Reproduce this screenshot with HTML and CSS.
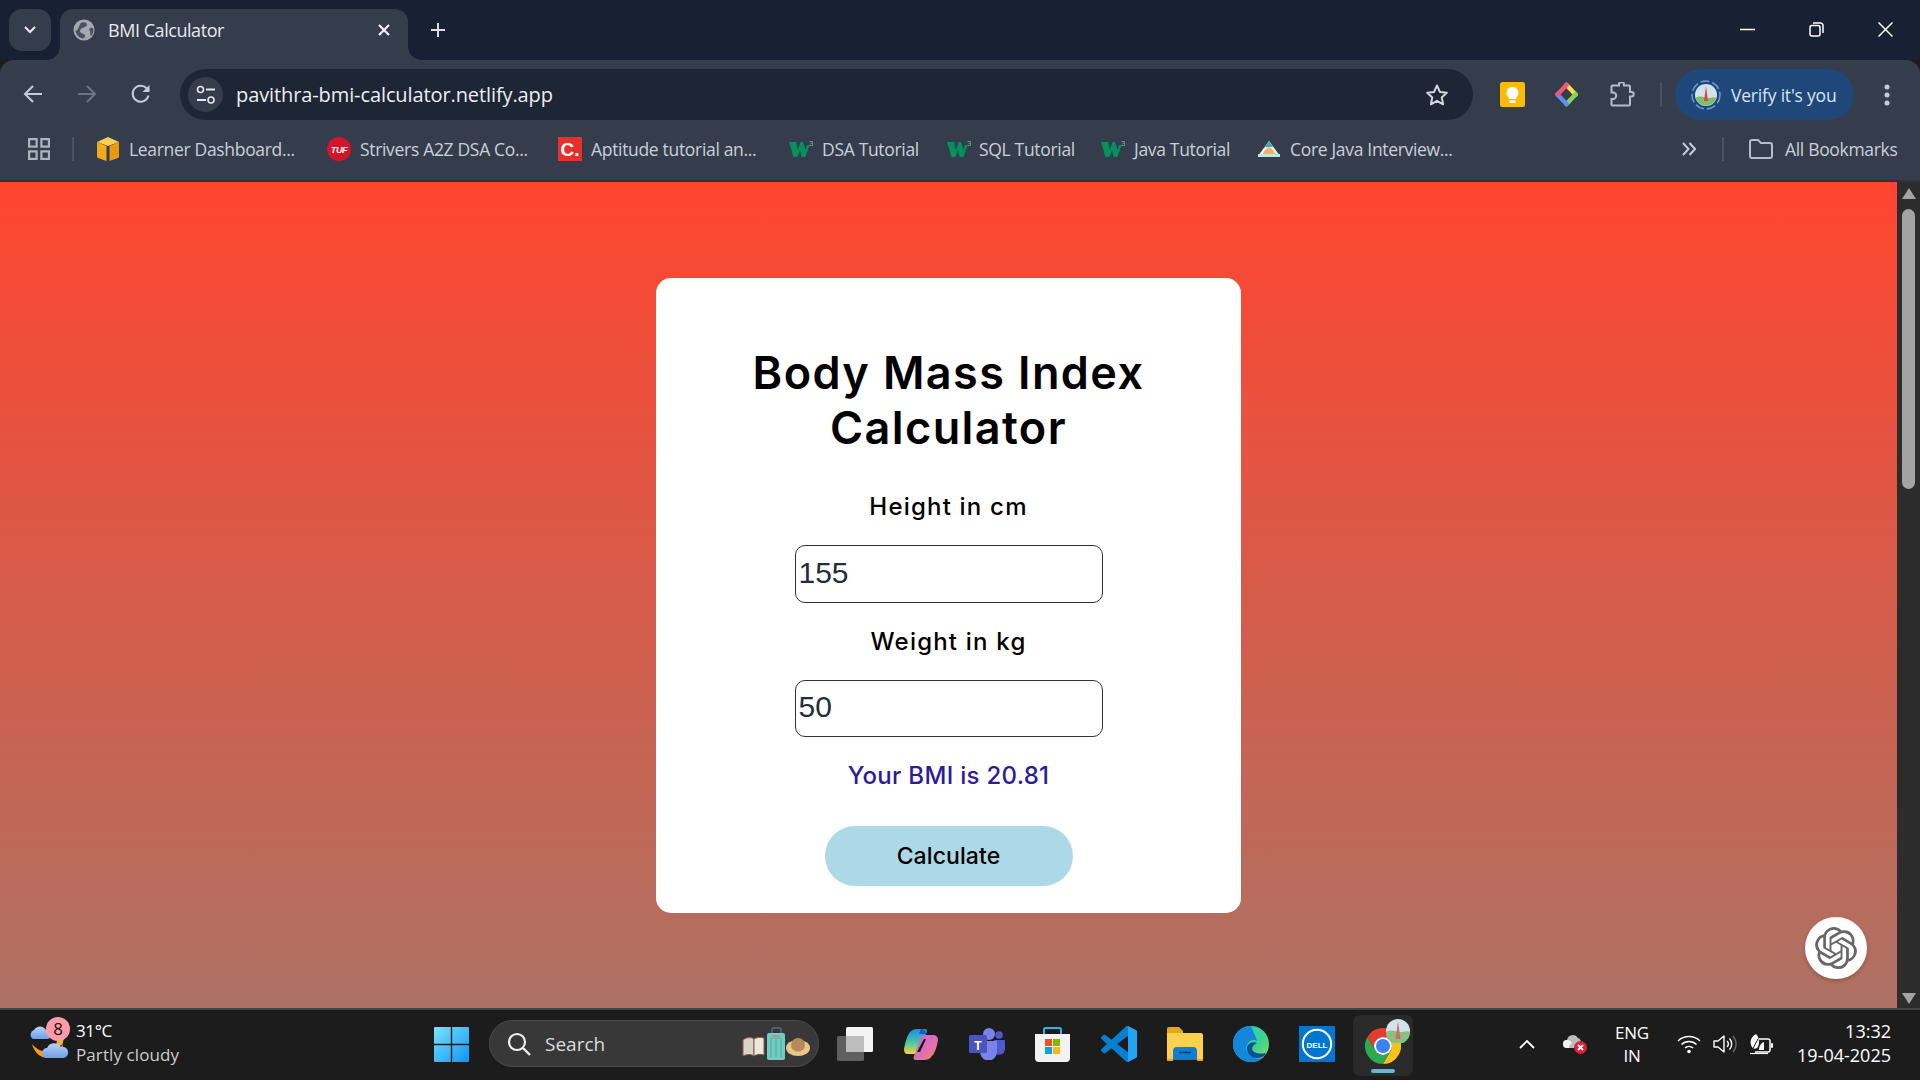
FILE: index.html
```html
<!DOCTYPE html>
<html lang="en">
<head>
<meta charset="utf-8">
<title>BMI Calculator</title>
<link rel="stylesheet" href="styles.css">
</head>
<body>
<header class="tabstrip">
  <button class="tab-menu"><svg width="14" height="8" viewBox="0 0 14 8"><path d="M2 1l5 5 5-5" fill="none" stroke="#e8eaed" stroke-width="2"/></svg></button>
  <div class="tab">
    <svg class="tab-globe" width="22" height="22" viewBox="0 0 22 22"><circle cx="11" cy="11" r="10.500" fill="#a3a9b3"/><path d="M9 3.500c3-.5 5 .5 5 2s-2 2.500-3.500 3S7 10 7 12s3 2.500 4.500 3.500.5 3-1 4C6.500 19 3 16 2.500 11.500 4.500 12 5 9.500 6 7.500S7 4 9 3.500zM17 9c1.500-.5 3 0 3.500 1.500 0 2.500-1 5-2.500 6.500-1-1.500-.5-3-1-4.500S16 9.500 17 9z" fill="#4a5160"/></svg>
    <span class="tab-title">BMI Calculator</span>
    <svg class="tab-close" width="14" height="14" viewBox="0 0 14 14"><path d="M2 2l10 10M12 2L2 12" stroke="#eef0f3" stroke-width="2.200"/></svg>
  </div>
  <svg class="new-tab" width="16" height="16" viewBox="0 0 16 16"><path d="M8 1v14M1 8h14" stroke="#d9dde3" stroke-width="2"/></svg>
  <div class="win-controls">
    <svg width="15" height="15" viewBox="0 0 15 15"><path d="M0 7.500h15" stroke="#fff" stroke-width="1.500"/></svg>
    <svg width="15" height="15" viewBox="0 0 15 15"><rect x="1" y="3.500" width="10" height="10.500" rx="2" fill="none" stroke="#fff" stroke-width="1.500"/><path d="M4 1h7.500A2.500 2.500 0 0 1 14 3.500V11" fill="none" stroke="#fff" stroke-width="1.500"/></svg>
    <svg width="15" height="15" viewBox="0 0 15 15"><path d="M.5.500l14 14M14.500.500l-14 14" stroke="#fff" stroke-width="1.500"/></svg>
  </div>
</header>

<nav class="toolbar">
  <svg class="nav-btn" width="24" height="24" viewBox="0 0 24 24"><path d="M21 12H5M12 4l-8 8 8 8" fill="none" stroke="#c5ccd6" stroke-width="2"/></svg>
  <svg class="nav-btn" width="24" height="24" viewBox="0 0 24 24"><path d="M3 12h16M12 4l8 8-8 8" fill="none" stroke="#6e7582" stroke-width="2"/></svg>
  <svg class="nav-btn" width="24" height="24" viewBox="0 0 24 24"><path d="M19.500 13.500A8 8 0 1 1 17.600 6.300L20 8.600" fill="none" stroke="#c5ccd6" stroke-width="2"/><path d="M20.500 3v7h-7z" fill="#c5ccd6"/></svg>
  <div class="omnibox">
    <span class="site-chip"><svg width="20" height="20" viewBox="0 0 20 20"><circle cx="4.500" cy="4.500" r="3" fill="none" stroke="#e4e7ec" stroke-width="1.600"/><path d="M10 4.500h9M1 15h9" stroke="#e4e7ec" stroke-width="1.800"/><circle cx="15" cy="15" r="3" fill="none" stroke="#e4e7ec" stroke-width="1.600"/></svg></span>
    <span class="url">pavithra-bmi-calculator.netlify.app</span>
    <svg class="star" width="24" height="24" viewBox="0 0 24 24"><path d="M12 2.500l2.900 6.400 6.900.8-5.100 4.700 1.400 6.900-6.100-3.500-6.100 3.500 1.400-6.900-5.100-4.700 6.900-.8z" fill="none" stroke="#d2d6dc" stroke-width="2" stroke-linejoin="round"/></svg>
  </div>
  <svg class="ext ext-keep" width="25" height="25" viewBox="0 0 25 25"><rect width="25" height="25" rx="2.500" fill="#fbbc04"/><path d="M12.500 5a6 6 0 0 0-3.500 10.800V17h7v-1.200A6 6 0 0 0 12.500 5z" fill="#fff"/><rect x="9.500" y="18.500" width="6" height="2.500" fill="#fff"/></svg>
  <svg class="ext ext-diamond" width="25" height="25" viewBox="0 0 25 25"><path d="M12.500 3l9 9.500" stroke="#f4e04d" stroke-width="4.500" stroke-linecap="round"/><path d="M21.500 12.500l-9 9.500" stroke="#7ed957" stroke-width="4.500" stroke-linecap="round"/><path d="M12.500 22l-9-9.500" stroke="#5b8df6" stroke-width="4.500" stroke-linecap="round"/><path d="M3.500 12.500l9-9.500" stroke="#f0567a" stroke-width="4.500" stroke-linecap="round"/></svg>
  <svg class="ext ext-puzzle" width="25" height="25" viewBox="0 0 25 25"><path d="M2.500 4h6.500V3a2.500 2.500 0 0 1 5 0v1h5a1 1 0 0 1 1 1v5.500h1.500a2.200 2.200 0 0 1 0 4.400H20V23a1 1 0 0 1-1 1H2.500a1 1 0 0 1-1-1v-5.500H3a3.200 3.200 0 0 0 0-6.400H1.500V5a1 1 0 0 1 1-1z" fill="none" stroke="#b5bcc8" stroke-width="2" transform="translate(0 -.5)"/></svg>
  <span class="tool-sep"></span>
  <div class="profile">
    <svg width="30" height="30" viewBox="0 0 30 30"><circle cx="15" cy="15" r="14" fill="none" stroke="#6f9bd6" stroke-width="1.500" stroke-dasharray="9 3"/><circle cx="15" cy="15" r="11" fill="#cfe4ea"/><path d="M4.500 18c4-3 8-1 10.500 0s7-2 10.500 0A11 11 0 0 1 4.500 18z" fill="#7fbf6a"/><path d="M15 6l2 15h-4z" fill="#e0453c"/></svg>
    <span class="verify">Verify it's you</span>
  </div>
  <svg class="kebab" width="6" height="22" viewBox="0 0 6 22"><circle cx="3" cy="3" r="2.500" fill="#c5ccd6"/><circle cx="3" cy="11" r="2.500" fill="#c5ccd6"/><circle cx="3" cy="19" r="2.500" fill="#c5ccd6"/></svg>
</nav>

<nav class="bookmarks">
  <svg class="apps" width="22" height="22" viewBox="0 0 22 22"><g fill="none" stroke="#aeb4be" stroke-width="2.200"><rect x="1.100" y="1.100" width="7.500" height="7.500"/><rect x="13.400" y="1.100" width="7.500" height="7.500"/><rect x="1.100" y="13.400" width="7.500" height="7.500"/><rect x="13.400" y="13.400" width="7.500" height="7.500"/></g></svg>
  <span class="bm-sep"></span>
  <a class="bm bm-1"><svg width="22" height="24" viewBox="0 0 22 24"><path d="M0 5l11-5 11 5-11 4z" fill="#f6cf57"/><path d="M0 5l9.500 4v15L1 21a1.500 1.500 0 0 1-1-1.500z" fill="#f0ac1c"/><path d="M22 5l-9.500 4v15l8.500-3a1.500 1.500 0 0 0 1-1.500z" fill="#e89a10"/></svg><span>Learner Dashboard...</span></a>
  <a class="bm bm-2"><svg width="24" height="24" viewBox="0 0 24 24"><circle cx="12" cy="12" r="12" fill="#d3142a"/><text x="12" y="15.500" class="logo-tuf">TUF</text></svg><span>Strivers A2Z DSA Co...</span></a>
  <a class="bm bm-3"><svg width="24" height="24" viewBox="0 0 24 24"><rect width="24" height="24" fill="#e8302a"/><text x="12" y="19" class="logo-c">C.</text></svg><span>Aptitude tutorial an...</span></a>
  <a class="bm bm-4"><svg width="24" height="18" viewBox="0 0 24 18"><path d="M0 2h7l2 8 2.500-8H14l2.500 8 1.500-5h2.500l-4 12h-4L11 10l-2.500 7h-4z" fill="#04915f"/><text x="20" y="6" class="logo-3">3</text></svg><span>DSA Tutorial</span></a>
  <a class="bm bm-5"><svg width="24" height="18" viewBox="0 0 24 18"><path d="M0 2h7l2 8 2.500-8H14l2.500 8 1.500-5h2.500l-4 12h-4L11 10l-2.500 7h-4z" fill="#04915f"/><text x="20" y="6" class="logo-3">3</text></svg><span>SQL Tutorial</span></a>
  <a class="bm bm-6"><svg width="24" height="18" viewBox="0 0 24 18"><path d="M0 2h7l2 8 2.500-8H14l2.500 8 1.500-5h2.500l-4 12h-4L11 10l-2.500 7h-4z" fill="#04915f"/><text x="20" y="6" class="logo-3">3</text></svg><span>Java Tutorial</span></a>
  <a class="bm bm-7"><svg width="24" height="18" viewBox="0 0 24 18"><path d="M12 1L1 16h22z" fill="#eef3f5"/><path d="M12 1L8 7h8z" fill="#3fa7b5"/><path d="M8 10l4-3 4 3 3 5H5z" fill="#f4b063"/><path d="M1 14h22v3H1z" fill="#bfe5ea"/></svg><span>Core Java Interview...</span></a>
  <svg class="more" width="14" height="14" viewBox="0 0 14 14"><path d="M1 1l5.500 6L1 13M7.500 1L13 7l-5.500 6" fill="none" stroke="#c5ccd6" stroke-width="2"/></svg>
  <span class="bm-sep bm-sep-right"></span>
  <a class="bm bm-all"><svg width="24" height="20" viewBox="0 0 24 20"><path d="M1 3a2 2 0 0 1 2-2h6l3 3h9a2 2 0 0 1 2 2v11a2 2 0 0 1-2 2H3a2 2 0 0 1-2-2z" fill="none" stroke="#b5bcc8" stroke-width="2"/></svg><span>All Bookmarks</span></a>
</nav>

<div class="viewport">
  <main class="page">
    <section class="card">
      <h1>Body Mass Index Calculator</h1>
      <label class="field-label" for="h">Height in cm</label>
      <input class="field" id="h" type="text" value="155">
      <label class="field-label field-next" for="w">Weight in kg</label>
      <input class="field" id="w" type="text" value="50">
      <p class="result">Your BMI is 20.81</p>
      <button class="calc">Calculate</button>
    </section>
    <button class="gpt"><svg width="42" height="42" viewBox="0 0 24 24"><path fill="#676767" d="M22.2819 9.8211a5.9847 5.9847 0 0 0-.5157-4.9108 6.0462 6.0462 0 0 0-6.5098-2.9A6.0651 6.0651 0 0 0 4.9807 4.1818a5.9847 5.9847 0 0 0-3.9977 2.9 6.0462 6.0462 0 0 0 .7427 7.0966 5.98 5.98 0 0 0 .511 4.9107 6.051 6.051 0 0 0 6.5146 2.9001A5.9847 5.9847 0 0 0 13.2599 24a6.0557 6.0557 0 0 0 5.7718-4.2058 5.9894 5.9894 0 0 0 3.9977-2.9001 6.0557 6.0557 0 0 0-.7475-7.0729zm-9.022 12.6081a4.4755 4.4755 0 0 1-2.8764-1.0408l.1419-.0804 4.7783-2.7582a.7948.7948 0 0 0 .3927-.6813v-6.7369l2.02 1.1686a.071.071 0 0 1 .038.052v5.5826a4.504 4.504 0 0 1-4.4945 4.4944zm-9.6607-4.1254a4.4708 4.4708 0 0 1-.5346-3.0137l.142.0852 4.783 2.7582a.7712.7712 0 0 0 .7806 0l5.8428-3.3685v2.3324a.0804.0804 0 0 1-.0332.0615L9.74 19.9502a4.4992 4.4992 0 0 1-6.1408-1.6464zM2.3408 7.8956a4.485 4.485 0 0 1 2.3655-1.9728V11.6a.7664.7664 0 0 0 .3879.6765l5.8144 3.3543-2.0201 1.1685a.0757.0757 0 0 1-.071 0l-4.8303-2.7865A4.504 4.504 0 0 1 2.3408 7.872zm16.5963 3.8558L13.1038 8.364 15.1192 7.2a.0757.0757 0 0 1 .071 0l4.8303 2.7913a4.4944 4.4944 0 0 1-.6765 8.1042v-5.6772a.79.79 0 0 0-.407-.667zm2.0107-3.0231l-.142-.0852-4.7735-2.7818a.7759.7759 0 0 0-.7854 0L9.409 9.2297V6.8974a.0662.0662 0 0 1 .0284-.0615l4.8303-2.7866a4.4992 4.4992 0 0 1 6.6802 4.66zM8.3065 12.863l-2.02-1.1638a.0804.0804 0 0 1-.038-.0567V6.0742a4.4992 4.4992 0 0 1 7.3757-3.4537l-.142.0805L8.704 5.459a.7948.7948 0 0 0-.3927.6813zm1.0976-2.3654l2.602-1.4998 2.6069 1.4998v2.9994l-2.5974 1.4997-2.6067-1.4997Z"/></svg></button>
  </main>
  <aside class="scrollbar">
    <span class="arrow-up"></span>
    <span class="thumb"></span>
    <span class="arrow-down"></span>
  </aside>
</div>

<footer class="taskbar">
  <div class="weather">
    <svg class="weather-icon" width="42" height="42" viewBox="0 0 42 42"><defs><linearGradient id="cl" x1="0" y1="0" x2="0" y2="1"><stop offset="0" stop-color="#b6d3f7"/><stop offset="1" stop-color="#6f9de6"/></linearGradient></defs><path d="M3 27c2 8 8 14 16 14 9 0 15-6 15-14-3 6-8 8-14 8-7 0-13-3-17-8z" fill="#f59b1c"/><path d="M34 16c1 4 1 8-1 12l-6 2 2-14z" fill="#f2b330"/><path d="M4 22a5 5 0 0 1 1-9 7 7 0 0 1 12 0 4.500 4.500 0 0 1 2 9z" fill="url(#cl)"/><path d="M18 41a5 5 0 0 1 0-10 8 8 0 0 1 14-1 5.500 5.500 0 0 1 3 11z" fill="url(#cl)"/><circle cx="29" cy="12" r="12" fill="#ff9ba8"/><text x="29" y="18" class="badge-num">8</text></svg>
    <div class="weather-text"><span class="temp">31°C</span><span class="cond">Partly cloudy</span></div>
  </div>
  <svg class="win-logo" width="35" height="35" viewBox="0 0 35 35"><defs><linearGradient id="wl" x1="0" y1="0" x2="1" y2="1"><stop offset="0" stop-color="#79e4ff"/><stop offset="1" stop-color="#0d94f5"/></linearGradient></defs><path d="M1 0h15.800v16.800H0V1a1 1 0 0 1 1-1zM18.200 0H34a1 1 0 0 1 1 1v15.800H18.200zM0 18.200h16.800V35H1a1 1 0 0 1-1-1zM18.200 18.200H35V34a1 1 0 0 1-1 1H18.200z" fill="url(#wl)"/></svg>
  <div class="search">
    <svg width="24" height="24" viewBox="0 0 24 24"><circle cx="10" cy="10" r="8" fill="none" stroke="#f0f0f0" stroke-width="2.200"/><path d="M16 16l7 7" stroke="#f0f0f0" stroke-width="2.400"/></svg>
    <span class="search-text">Search</span>
    <svg class="search-art" width="68" height="34" viewBox="0 0 68 34"><path d="M1 13c4-3 8-3 11-1v17c-3-2-7-2-11 0z" fill="#d9d3c8" stroke="#8a5a44"/><path d="M12 12c3-2 7-2 10-1v17c-3-1-7-1-10 1z" fill="#ece7dc" stroke="#8a5a44"/><path d="M30 6V2a1.500 1.500 0 0 1 1.500-1h6A1.500 1.500 0 0 1 39 2v4" fill="none" stroke="#4d6b8f" stroke-width="1.500"/><rect x="25" y="6" width="18" height="27" rx="2" fill="#6ecdc0"/><path d="M29 10v20M34 10v20M39 10v20" stroke="#4eaaa0"/><rect x="30" y="8" width="8" height="4" fill="#8fa8a8"/><ellipse cx="56" cy="21" rx="12" ry="8" fill="#e7c687"/><ellipse cx="56" cy="18" rx="7" ry="7" fill="#b9895a"/><path d="M46 21c5 4 15 4 21 0-2 4-18 5-21 0z" fill="#f0d48c"/></svg>
  </div>
  <svg class="app app-tv" width="36" height="34" viewBox="0 0 36 34"><rect x="0" y="9" width="27" height="25" rx="1.500" fill="#5f5f5f"/><rect x="9" y="0" width="27" height="25" rx="1.500" fill="#f3f3f3"/><rect x="9" y="9" width="18" height="16" fill="#bdbdbd"/></svg>
  <svg class="app app-cp" width="34" height="32" viewBox="0 0 34 32"><defs><linearGradient id="cpa" x1="0" y1="0" x2="0" y2="1"><stop offset="0" stop-color="#1b8ce8"/><stop offset=".55" stop-color="#4bc8a0"/><stop offset="1" stop-color="#f5d33c"/></linearGradient><linearGradient id="cpb" x1="0" y1="0" x2="1" y2="1"><stop offset="0" stop-color="#b06be0"/><stop offset=".6" stop-color="#e86eb0"/><stop offset="1" stop-color="#f5913e"/></linearGradient></defs><path d="M13 1h8c3 0 2 3 1 5l-7 18c-1 2-2 2-5 2H4c-3 0-4-2-4-5 1-6 3-13 6-17 2-2 4-3 7-3z" fill="url(#cpa)"/><path d="M23 7h6c3 0 5 2 5 5-1 6-3 13-6 16-2 3-5 4-8 4h-8c-2 0-3-1-2-4l6-17c1-3 3-4 7-4z" fill="url(#cpb)"/><path d="M20 11l-7 13h3l6-13z" fill="#111"/><path d="M17 1c3 0 5 2 5 5h-7z" fill="#1559c8"/></svg>
  <svg class="app app-teams" width="36" height="32" viewBox="0 0 36 32"><circle cx="20" cy="6" r="6" fill="#7b83eb"/><circle cx="30" cy="7" r="3.800" fill="#5059c9"/><path d="M25 12h10a1 1 0 0 1 1 1v8a6 6 0 0 1-9 5z" fill="#5059c9"/><path d="M11 13h17v11a8.500 8.500 0 0 1-17 0z" fill="#7b83eb"/><rect x="0" y="7" width="18" height="18" rx="1.500" fill="#4b53bc"/><text x="9" y="21.500" class="logo-t">T</text></svg>
  <svg class="app app-store" width="35" height="35" viewBox="0 0 35 35"><path d="M9 7V2.500A1.500 1.500 0 0 1 10.500 1h14A1.500 1.500 0 0 1 26 2.500V7" fill="none" stroke="#29b6e8" stroke-width="2"/><path d="M0 7h35v24a4 4 0 0 1-4 4H4a4 4 0 0 1-4-4z" fill="#f3f3f3"/><rect x="10" y="12" width="7" height="7" fill="#f25022"/><rect x="18" y="12" width="7" height="7" fill="#7fba00"/><rect x="10" y="20" width="7" height="7" fill="#00a4ef"/><rect x="18" y="20" width="7" height="7" fill="#ffb900"/></svg>
  <svg class="app app-vs" width="36" height="36" viewBox="0 0 24 24"><path fill="#0b7fcf" d="M23.15 2.587L18.21.21a1.494 1.494 0 0 0-1.705.29l-9.46 8.63-4.12-3.128a.999.999 0 0 0-1.276.057L.327 7.261A1 1 0 0 0 .326 8.74L3.899 12 .326 15.26a1 1 0 0 0 .001 1.479L1.65 17.94a.999.999 0 0 0 1.276.057l4.12-3.128 9.46 8.63a1.492 1.492 0 0 0 1.704.29l4.942-2.377A1.5 1.5 0 0 0 24 20.06V3.939a1.5 1.5 0 0 0-.85-1.352zm-5.146 14.861L10.826 12l7.178-5.448v10.896z"/><path fill="#24a3f0" d="M18 .1c.1 0 .2.1.3.1l4.850 2.387A1.500 1.500 0 0 1 24 3.939v16.122a1.500 1.500 0 0 1-.85 1.352l-4.940 2.377c-.1.050-.1.050-.210.100z"/></svg>
  <svg class="app app-folder" width="36" height="34" viewBox="0 0 36 34"><path d="M0 2a2 2 0 0 1 2-2h10l4 4v6H0z" fill="#e3a71a"/><path d="M0 6h34a2 2 0 0 1 2 2v24H0z" fill="#fdd04f"/><path d="M6 33V24a4 4 0 0 1 4-4h16a4 4 0 0 1 4 4v9z" fill="#0f7ed4"/><path d="M12 25.500h12" stroke="#083f78" stroke-width="1.600"/><rect y="32" width="6" height="2" fill="#e7a816"/><rect x="30" y="32" width="6" height="2" fill="#e7a816"/></svg>
  <svg class="app app-edge" width="36" height="36" viewBox="0 0 36 36"><defs><linearGradient id="eg" x1="0" y1="0" x2="1" y2="1"><stop offset="0" stop-color="#30c6d6"/><stop offset=".6" stop-color="#3ed18f"/><stop offset="1" stop-color="#88e05a"/></linearGradient></defs><circle cx="18" cy="18" r="18" fill="url(#eg)"/><path d="M18 0C7 0 0 8 0 18c0 10 8 18 18 18 6 0 10-2 13-5-4 2-9 2-13-1-5-3-6-9-3-13 2-3 6-4 9-2-1-5-4-9-6-15z" fill="#1587d8"/><path d="M24 17c-4-2-9 0-10 4-1 6 4 11 10 11 3 0 5-1 7-2 2-2 2-3 1-3-3 1-9 1-12-2-2-3 0-6 4-8z" fill="#0b4f9c"/></svg>
  <svg class="app app-dell" width="36" height="36" viewBox="0 0 36 36"><rect width="36" height="36" fill="#0076ce"/><circle cx="18" cy="18" r="14.200" fill="none" stroke="#fff" stroke-width="2"/><text x="18" y="21.500" class="logo-dell">DELL</text></svg>
  <div class="app-chrome">
    <svg class="chrome-icon" width="36" height="36" viewBox="0 0 36 36"><path d="M2.400 9A18 18 0 0 1 33.600 9H18A9 9 0 0 0 10.200 22.500z" fill="#e33b2e"/><path d="M33.600 9A18 18 0 0 1 18 36L25.800 22.500A9 9 0 0 0 18 9z" fill="#fbc116"/><path d="M18 36A18 18 0 0 1 2.400 9L10.200 22.500A9 9 0 0 0 25.800 22.500z" fill="#2da94f"/><circle cx="18" cy="18" r="9" fill="#fff"/><circle cx="18" cy="18" r="7" fill="#3b82ee"/></svg>
    <svg class="chrome-avatar" width="24" height="24" viewBox="0 0 24 24"><circle cx="12" cy="12" r="12" fill="#cfe4ea"/><path d="M0 13c5-3 8-1 12 0s8-2 12 0a12 12 0 0 1-24 0z" fill="#8cbf82"/><path d="M12 2l2.500 18h-5z" fill="#d9666a"/></svg>
    <span class="chrome-active"></span>
  </div>
  <svg class="tray-chev" width="16" height="9" viewBox="0 0 16 9"><path d="M1 8l7-7 7 7" fill="none" stroke="#fff" stroke-width="1.800"/></svg>
  <svg class="tray-cloud" width="24" height="20" viewBox="0 0 24 20"><path d="M4 14a4 4 0 0 1 0-8 6 6 0 0 1 11-2 5 5 0 0 1 3 5v5z" fill="#bdbdbd"/><path d="M4 14a4 4 0 0 1 0-8c2-.5 4 1 5 3-2 1-3 3-3 5z" fill="#f2f2f2"/><circle cx="17.500" cy="13.500" r="6.500" fill="#e01e36"/><path d="M15 11l5 5M20 11l-5 5" stroke="#fff" stroke-width="1.800"/></svg>
  <div class="lang"><span>ENG</span><span>IN</span></div>
  <svg class="tray-wifi" width="24" height="20" viewBox="0 0 24 20"><g fill="none" stroke="#fff" stroke-width="1.500"><path d="M1 7a16 16 0 0 1 22 0"/><path d="M4.500 10.500a11 11 0 0 1 15 0"/><path d="M8 14a6 6 0 0 1 8 0"/></g><circle cx="12" cy="17.500" r="1.800" fill="#fff"/></svg>
  <svg class="tray-vol" width="24" height="20" viewBox="0 0 24 20"><path d="M1 7h4l6-5v16l-6-5H1z" fill="none" stroke="#fff" stroke-width="1.400" stroke-linejoin="round"/><path d="M14 7a4 4 0 0 1 0 6M16.500 4.500a8 8 0 0 1 0 11" fill="none" stroke="#fff" stroke-width="1.400"/><path d="M20 2a12 12 0 0 1 0 16" fill="none" stroke="#666" stroke-width="1.400"/></svg>
  <svg class="tray-bat" width="24" height="22" viewBox="0 0 24 22"><path d="M10 6h9a2 2 0 0 1 2 2v9a2 2 0 0 1-2 2H6" fill="none" stroke="#fff" stroke-width="1.500"/><path d="M1 20.500h18" stroke="#fff" stroke-width="1.200"/><rect x="22" y="10" width="2" height="5" rx="1" fill="#fff"/><path d="M7 1C2 4 0 9 3 14c1 2 3 2 5 1 3-3 3-10-1-14z" fill="#fff"/><path d="M15 9c-3 1-5 4-5 8h5z" fill="#fff"/><path d="M2 19L9 6" stroke="#1c1c1c" stroke-width="1"/></svg>
  <div class="clock"><span>13:32</span><span>19-04-2025</span></div>
</footer>
</body>
</html>
```

FILE: styles.css
```css
* { box-sizing: border-box; }
html, body { margin: 0; height: 100%; overflow: hidden; }
body { display: flex; flex-direction: column; height: 1080px; font-family: "Open Sans", "Noto Sans", sans-serif; background: #1c1c1c; }
svg { display: block; flex: none; }
button { border: 0; padding: 0; font: inherit; }

/* Tab strip */
.tabstrip { display: flex; align-items: flex-start; height: 60px; padding: 9px 27px 0 9px; background: #182133; }
.tab-menu { display: flex; align-items: center; justify-content: center; width: 42px; height: 42px; border-radius: 13px; background: #353d4d; }
.tab { position: relative; display: flex; align-items: center; width: 348px; height: 51px; margin-left: 9px; padding: 0 17px 9px 13px; border-radius: 13px 13px 0 0; background: #353d4d; }
.tab::before, .tab::after { content: ""; position: absolute; bottom: 0; width: 13px; height: 13px; }
.tab::before { left: -13px; background: radial-gradient(circle at 0 0, #182133 12.500px, #353d4d 13px); }
.tab::after { right: -13px; background: radial-gradient(circle at 100% 0, #182133 12.500px, #353d4d 13px); }
.tab-title { margin-left: 13px; font-size: 18px; letter-spacing: -.45px; color: #e6e9ee; white-space: nowrap; }
.tab-close { margin-left: auto; }
.new-tab { margin: 13px 0 0 22px; }
.win-controls { display: flex; gap: 54px; margin: 13px 0 0 auto; }

/* Toolbar */
.toolbar { position: relative; display: flex; align-items: flex-start; height: 60px; padding: 9px 0 0 21px; background: #353d4d; border-radius: 14px 14px 0 0; }
.nav-btn { margin: 13px 30px 0 0; }
.nav-btn:nth-child(3) { margin-right: 27px; }
.omnibox { display: flex; align-items: center; width: 1293px; height: 51px; padding: 0 24px 0 8px; border-radius: 26px; background: #1e2636; }
.site-chip { display: flex; align-items: center; justify-content: center; width: 35px; height: 35px; border-radius: 50%; background: #353d4d; }
.url { margin-left: 13px; font-size: 20px; letter-spacing: -.1px; color: #eceef2; white-space: nowrap; }
.star { margin-left: auto; }
.ext { margin-top: 13px; }
.ext-keep { margin-left: 27px; }
.ext-diamond { margin-left: 29px; }
.ext-puzzle { margin-left: 31px; }
.tool-sep { width: 2px; height: 24px; margin: 14px 0 0 25px; background: #4b5362; }
.profile { display: flex; align-items: center; width: 179px; height: 51px; margin-left: 13px; padding-left: 16px; border-radius: 26px; background: #1f477a; }
.verify { margin-left: 10px; font-size: 17.500px; letter-spacing: -.2px; color: #d7e3f4; white-space: nowrap; }
.kebab { margin: 15px 0 0 30px; }

/* Bookmarks */
.bookmarks { display: flex; align-items: center; height: 62px; padding: 0 0 2px 28px; background: #353d4d; border-bottom: 2px solid #2c3341; }
.apps { margin-right: 22px; }
.bm-sep { width: 2px; height: 24px; background: #4b5362; margin-right: 23px; }
.bm { display: flex; align-items: center; gap: 10px; color: #c9cfd8; font-size: 17.500px; letter-spacing: -.32px; white-space: nowrap; }
.bm-1 { width: 230px; }
.bm-2 { width: 231px; gap: 9px; }
.bm-3 { width: 231px; gap: 9px; }
.bm-4 { width: 158px; gap: 9px; }
.bm-5 { width: 154px; gap: 8px; }
.bm-6 { width: 156px; gap: 9px; }
.bm-7 { width: 425px; gap: 9px; }
.more { margin-right: 26px; }
.bm-sep-right { margin-right: 25px; }
.bm-all { gap: 12px; }
.logo-tuf { font: italic 700 9px "Liberation Sans", sans-serif; fill: #fff; text-anchor: middle; }
.logo-c { font: 700 19px "Liberation Sans", sans-serif; fill: #fff; text-anchor: middle; letter-spacing: 0; }
.logo-3 { font: 400 8px "Liberation Sans", sans-serif; fill: #7fb8a2; letter-spacing: 0; }
.logo-t { font: 700 12px "Liberation Sans", sans-serif; fill: #fff; text-anchor: middle; }
.logo-dell { font: 700 8px "Liberation Sans", sans-serif; fill: #fff; text-anchor: middle; }
.badge-num { font: 400 17px "Open Sans", sans-serif; fill: #111; text-anchor: middle; }

/* Page */
.viewport { display: flex; height: 826px; }
.page { position: relative; flex: 1; min-width: 0; background: linear-gradient(180deg, #ff4530 0%, #ad7264 100%); }
.card { display: flex; flex-direction: column; align-items: center; width: 585px; height: 635px; margin: 96px auto 0; padding-top: 67px; border-radius: 15px; background: #fff; font-family: Inter, "Open Sans", sans-serif; color: #000; }
h1 { width: 100%; margin: 0; padding: 0 70px; font-size: 45px; line-height: 55px; font-weight: 600; letter-spacing: 1.400px; text-align: center; }
.field-label { margin-top: 37px; font-size: 24px; line-height: 29px; font-weight: 500; letter-spacing: 1.200px; }
.field-next { margin-top: 24px; }
.field { width: 308px; height: 57.500px; margin-top: 24px; padding: 0 3px 2px 3px; border: 1.500px solid #333; border-radius: 10px; background: #fff; font: 400 30px "Liberation Sans", Arial, sans-serif; color: #1f2d3d; outline: none; }
.result { margin: 24px 0 0; font-size: 24px; line-height: 29px; font-weight: 500; letter-spacing: .3px; color: #2e1a9c; }
.calc { width: 248px; height: 60px; margin-top: 36px; border-radius: 30px; background: #add8e6; color: #000; font-family: Inter, sans-serif; font-size: 23px; font-weight: 500; letter-spacing: .1px; }
.gpt { position: absolute; right: 30px; bottom: 29px; display: flex; align-items: center; justify-content: center; width: 62px; height: 62px; border-radius: 50%; background: #fff; box-shadow: 0 2px 4px rgba(0,0,0,.2); }

/* Scrollbar */
.scrollbar { display: flex; flex-direction: column; align-items: center; width: 23px; padding: 6px 0 4px; background: #2c2c2c; }
.arrow-up, .arrow-down { width: 0; height: 0; border-left: 7.500px solid transparent; border-right: 7.500px solid transparent; }
.arrow-up { border-bottom: 11px solid #a3a3a3; }
.arrow-down { margin-top: auto; border-top: 11px solid #a3a3a3; }
.thumb { width: 13px; height: 280px; margin-top: 10px; border-radius: 7px; background: #a3a3a3; }

/* Taskbar */
.taskbar { display: flex; align-items: center; height: 72px; padding: 0 29px 2px 29px; background: #1c1c1c; border-top: 2px solid #444; color: #fff; font-family: "Open Sans", "Noto Sans", sans-serif; }
.weather { display: flex; align-items: center; width: 405px; }
.weather-icon { margin-top: -12px; }
.weather-text { display: flex; flex-direction: column; margin-left: 5px; font-size: 17px; line-height: 24px; letter-spacing: .1px; margin-top: -2px; }
.temp { color: #fff; letter-spacing: -.4px; }
.cond { color: #cdcdcd; }
.search { display: flex; align-items: center; width: 330px; height: 47px; margin: -1px 0 0 20px; padding: 0 8px 0 17px; border: 1.500px solid #4c4c4c; border-radius: 24px; background: #383838; }
.search-text { margin-left: 14px; font-size: 19px; letter-spacing: 0; color: #dcdcdc; }
.search-art { margin-left: auto; }
.app { margin-left: 30px; }
.app-tv { margin-left: 18px; }
.app-cp, .app-teams, .app-vs { margin-left: 31px; }
.app-chrome { position: relative; display: flex; align-items: center; justify-content: center; width: 60px; height: 61px; margin: 3px 0 0 18px; border-radius: 7px; background: #2a2a2a; }
.chrome-avatar { position: absolute; top: 4px; left: 33px; }
.chrome-active { position: absolute; bottom: 3px; left: 18px; width: 24px; height: 4px; border-radius: 2px; background: #62b9d0; }
.tray-chev { margin-left: 106px; }
.tray-cloud { margin-left: 28px; }
.lang { display: flex; flex-direction: column; align-items: center; width: 40px; margin-left: 25px; font-size: 17px; line-height: 23.500px; letter-spacing: -.2px; }
.tray-wifi { margin-left: 25px; }
.tray-vol, .tray-bat { margin-left: 12px; }
.clock { display: flex; flex-direction: column; align-items: flex-end; margin: -2px 0 0 auto; font-size: 18px; line-height: 24px; }
```
